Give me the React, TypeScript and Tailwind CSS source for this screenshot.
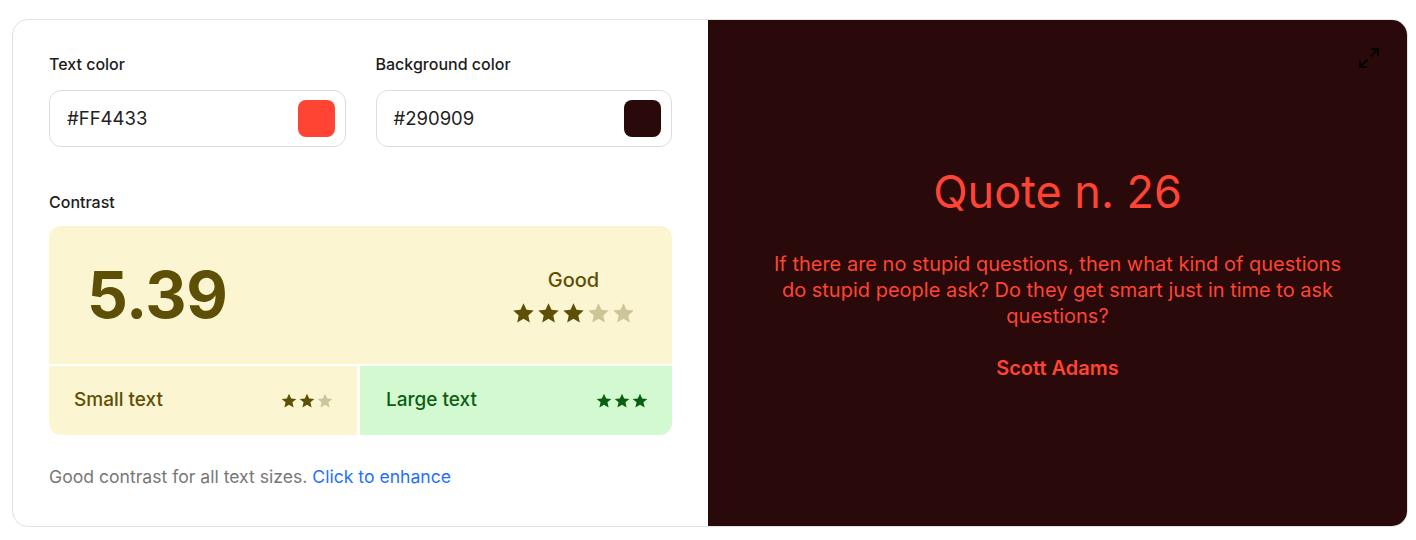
import { Maximize2 } from 'lucide-react';

function Star({ className }: { className: string }) {
  return (
    <svg viewBox="0 0 24 24" className={className} fill="currentColor">
      <path d="M12 2.2l2.9 6.3 6.9.7-5.2 4.6 1.5 6.8L12 17.1l-6.1 3.5 1.5-6.8-5.2-4.6 6.9-.7z" />
    </svg>
  );
}

function Stars({ on, total, size, color, dim }: { on: number; total: number; size: string; color: string; dim: string }) {
  return (
    <div className="flex items-center">
      {Array.from({ length: total }).map((_, i) => (
        <Star key={i} className={`${size} ${i < on ? color : dim}`} />
      ))}
    </div>
  );
}

function ColorField({ label, value, swatch }: { label: string; value: string; swatch: string }) {
  return (
    <div className="flex flex-col">
      <div className="text-[16px] font-medium text-[#1c1c1c] h-[22px] leading-[22px]">{label}</div>
      <div className="mt-[15px] h-[57px] rounded-[12px] border border-[#dcdcdc] flex items-center justify-between pl-[17px] pr-[10px]">
        <span className="text-[18.5px] text-[#222]">{value}</span>
        <span className={`w-[37px] h-[37px] rounded-[8px] ${swatch}`} />
      </div>
    </div>
  );
}

export default function App() {
  return (
    <div className="w-[1416px] h-[540px] bg-white pt-[19px] pl-[12px] font-['Inter',sans-serif]">
      <div className="w-[1396px] h-[508px] rounded-[16px] border border-[#e2e2e2] flex overflow-hidden">
        <div className="w-[695px] px-[36px] pt-[33px] flex flex-col">
          <div className="grid grid-cols-2 gap-[30px]">
            <ColorField label="Text color" value="#FF4433" swatch="bg-[#ff4433]" />
            <ColorField label="Background color" value="#290909" swatch="bg-[#290909]" />
          </div>

          <div className="mt-[44px] text-[16px] font-medium text-[#1c1c1c] h-[22px] leading-[22px]">Contrast</div>

          <div className="mt-[13px] rounded-[12px] overflow-hidden flex flex-col gap-[2px]">
            <div className="h-[138px] bg-[#fbf5d2] flex items-center justify-between pl-[38px] pr-[36px]">
              <span className="text-[64px] font-bold text-[#5e4f06] tracking-[-0.5px]">5.39</span>
              <div className="flex flex-col items-center gap-[6px]">
                <span className="text-[20px] font-medium text-[#5e4f06]">Good</span>
                <Stars on={3} total={5} size="w-[25px] h-[25px]" color="text-[#5e4f06]" dim="text-[#cdc59a]" />
              </div>
            </div>
            <div className="h-[69px] flex gap-[3px]">
              <div className="w-[308px] bg-[#fbf5d2] flex items-center justify-between pl-[25px] pr-[23px]">
                <span className="text-[19px] font-medium text-[#5e4f06]">Small text</span>
                <Stars on={2} total={3} size="w-[18px] h-[18px]" color="text-[#5e4f06]" dim="text-[#cdc59a]" />
              </div>
              <div className="flex-1 bg-[#d3f9d1] flex items-center justify-between pl-[26px] pr-[23px]">
                <span className="text-[19px] font-medium text-[#0b5f12]">Large text</span>
                <Stars on={3} total={3} size="w-[18px] h-[18px]" color="text-[#0b5f12]" dim="text-[#0b5f12]" />
              </div>
            </div>
          </div>

          <div className="mt-[29px] text-[17.6px] text-[#777]">
            Good contrast for all text sizes. <span className="text-[#1f6fff]">Click to enhance</span>
          </div>
        </div>

        <div className="flex-1 bg-[#290909] relative flex flex-col items-center justify-center text-[#ff4433]">
          <Maximize2 className="absolute top-[26px] right-[26px] w-[24px] h-[24px] text-black" strokeWidth={1.75} />
          <div className="text-[45px] leading-[52px]">Quote n. 26</div>
          <p className="mt-[33px] w-[582px] text-center text-[20px] leading-[26px]">
            If there are no stupid questions, then what kind of questions do stupid people ask? Do they get smart just in time to ask questions?
          </p>
          <div className="mt-[26px] text-[20px] leading-[26px] font-semibold">Scott Adams</div>
        </div>
      </div>
    </div>
  );
}
